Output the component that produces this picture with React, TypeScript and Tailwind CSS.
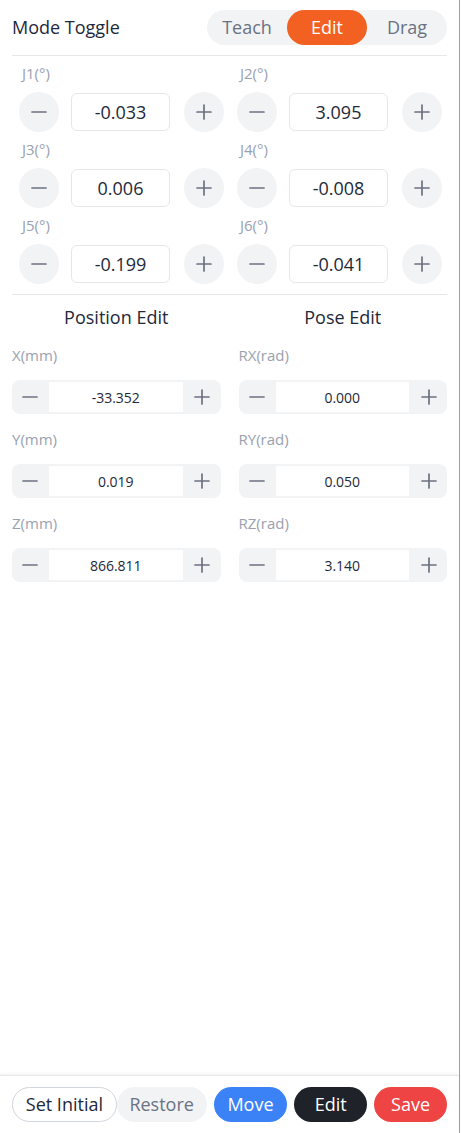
import React from "react";

const joints = [
  { label: "J1(°)", value: "-0.033" },
  { label: "J2(°)", value: "3.095" },
  { label: "J3(°)", value: "0.006" },
  { label: "J4(°)", value: "-0.008" },
  { label: "J5(°)", value: "-0.199" },
  { label: "J6(°)", value: "-0.041" },
];

const position = [
  { label: "X(mm)", value: "-33.352" },
  { label: "Y(mm)", value: "0.019" },
  { label: "Z(mm)", value: "866.811" },
];

const pose = [
  { label: "RX(rad)", value: "0.000" },
  { label: "RY(rad)", value: "0.050" },
  { label: "RZ(rad)", value: "3.140" },
];

function MinusIcon() {
  return (
    <svg width="16" height="16" viewBox="0 0 16 16" fill="none">
      <path d="M1 8h14" stroke="#6b7280" strokeWidth="1.7" strokeLinecap="round" />
    </svg>
  );
}

function PlusIcon() {
  return (
    <svg width="16" height="16" viewBox="0 0 16 16" fill="none">
      <path d="M1 8h14M8 1v14" stroke="#6b7280" strokeWidth="1.7" strokeLinecap="round" />
    </svg>
  );
}

function JointControl({ label, value }: { label: string; value: string }) {
  return (
    <div className="flex flex-col">
      <div className="h-5 pl-[3px] text-[15px] leading-5 text-gray-400">{label}</div>
      <div className="mt-[9px] flex items-center">
        <button className="flex h-10 w-10 items-center justify-center rounded-full bg-[#f2f3f5]">
          <MinusIcon />
        </button>
        <div className="ml-3 flex h-[38px] w-[100px] items-center justify-center rounded-md border border-gray-200 bg-white text-[18px] text-gray-800">
          {value}
        </div>
        <button className="ml-[14px] flex h-10 w-10 items-center justify-center rounded-full bg-[#f2f3f5]">
          <PlusIcon />
        </button>
      </div>
    </div>
  );
}

function StepInput({ label, value }: { label: string; value: string }) {
  return (
    <div className="flex flex-col">
      <div className="h-5 text-[15px] leading-5 text-gray-400">{label}</div>
      <div className="mt-[15px] flex h-[34px] items-stretch rounded-lg bg-[#f2f3f5]">
        <button className="flex w-9 items-center justify-center">
          <MinusIcon />
        </button>
        <div className="my-[1px] flex flex-1 items-center justify-center border border-gray-100 bg-white text-[14px] text-gray-800">
          {value}
        </div>
        <button className="flex w-[37px] items-center justify-center">
          <PlusIcon />
        </button>
      </div>
    </div>
  );
}

export default function App() {
  return (
    <div
      className="flex h-[1133px] w-[460px] flex-col border-r border-gray-400 bg-white"
      style={{ fontFamily: '"Open Sans", "Noto Sans CJK SC", sans-serif' }}
    >
      <div className="flex-1">
        {/* header */}
        <div className="mx-3 flex items-center justify-between border-b border-gray-200 pt-[10px] pb-[10px]">
          <span className="text-[18px] text-gray-800">Mode Toggle</span>
          <div className="flex h-[35px] rounded-full bg-[#f2f3f5] text-[18px]">
            <button className="w-20 rounded-full text-gray-500">Teach</button>
            <button className="w-20 rounded-full bg-[#f26122] text-white">Edit</button>
            <button className="w-20 rounded-full text-gray-500">Drag</button>
          </div>
        </div>

        {/* joints */}
        <div className="grid grid-cols-[205px_205px] gap-x-[13px] gap-y-[7px] pt-[7px] pl-[19px]">
          {joints.map((j) => (
            <JointControl key={j.label} label={j.label} value={j.value} />
          ))}
        </div>

        <div className="mx-3 mt-[10px] border-t border-gray-200" />

        {/* cartesian */}
        <div className="grid grid-cols-2 gap-x-[18px] px-3 pt-[8px]">
          <div className="flex flex-col gap-[15px]">
            <div className="mb-[-1px] h-7 text-center text-[18px] leading-7 text-gray-800">Position Edit</div>
            {position.map((p) => (
              <StepInput key={p.label} label={p.label} value={p.value} />
            ))}
          </div>
          <div className="flex flex-col gap-[15px]">
            <div className="mb-[-1px] h-7 text-center text-[18px] leading-7 text-gray-800">Pose Edit</div>
            {pose.map((p) => (
              <StepInput key={p.label} label={p.label} value={p.value} />
            ))}
          </div>
        </div>
      </div>

      {/* bottom actions */}
      <div className="flex items-center border-t border-gray-200 px-3 pt-[11px] pb-[11px] shadow-[0_-1px_3px_rgba(0,0,0,0.06)]">
        <button className="h-[35px] w-[105px] rounded-full border border-gray-300 bg-white text-[18px] text-gray-800">
          Set Initial
        </button>
        <button className="h-[35px] w-[90px] rounded-full bg-[#f2f3f5] text-[18px] text-gray-500">Restore</button>
        <button className="ml-[7px] h-[35px] w-[74px] rounded-full bg-[#3b82f6] text-[18px] text-white">Move</button>
        <button className="ml-[7px] h-[35px] w-[73px] rounded-full bg-[#1f2329] text-[18px] text-white">Edit</button>
        <button className="ml-[7px] h-[35px] w-[73px] rounded-full bg-[#ef4444] text-[18px] text-white">Save</button>
      </div>
    </div>
  );
}
